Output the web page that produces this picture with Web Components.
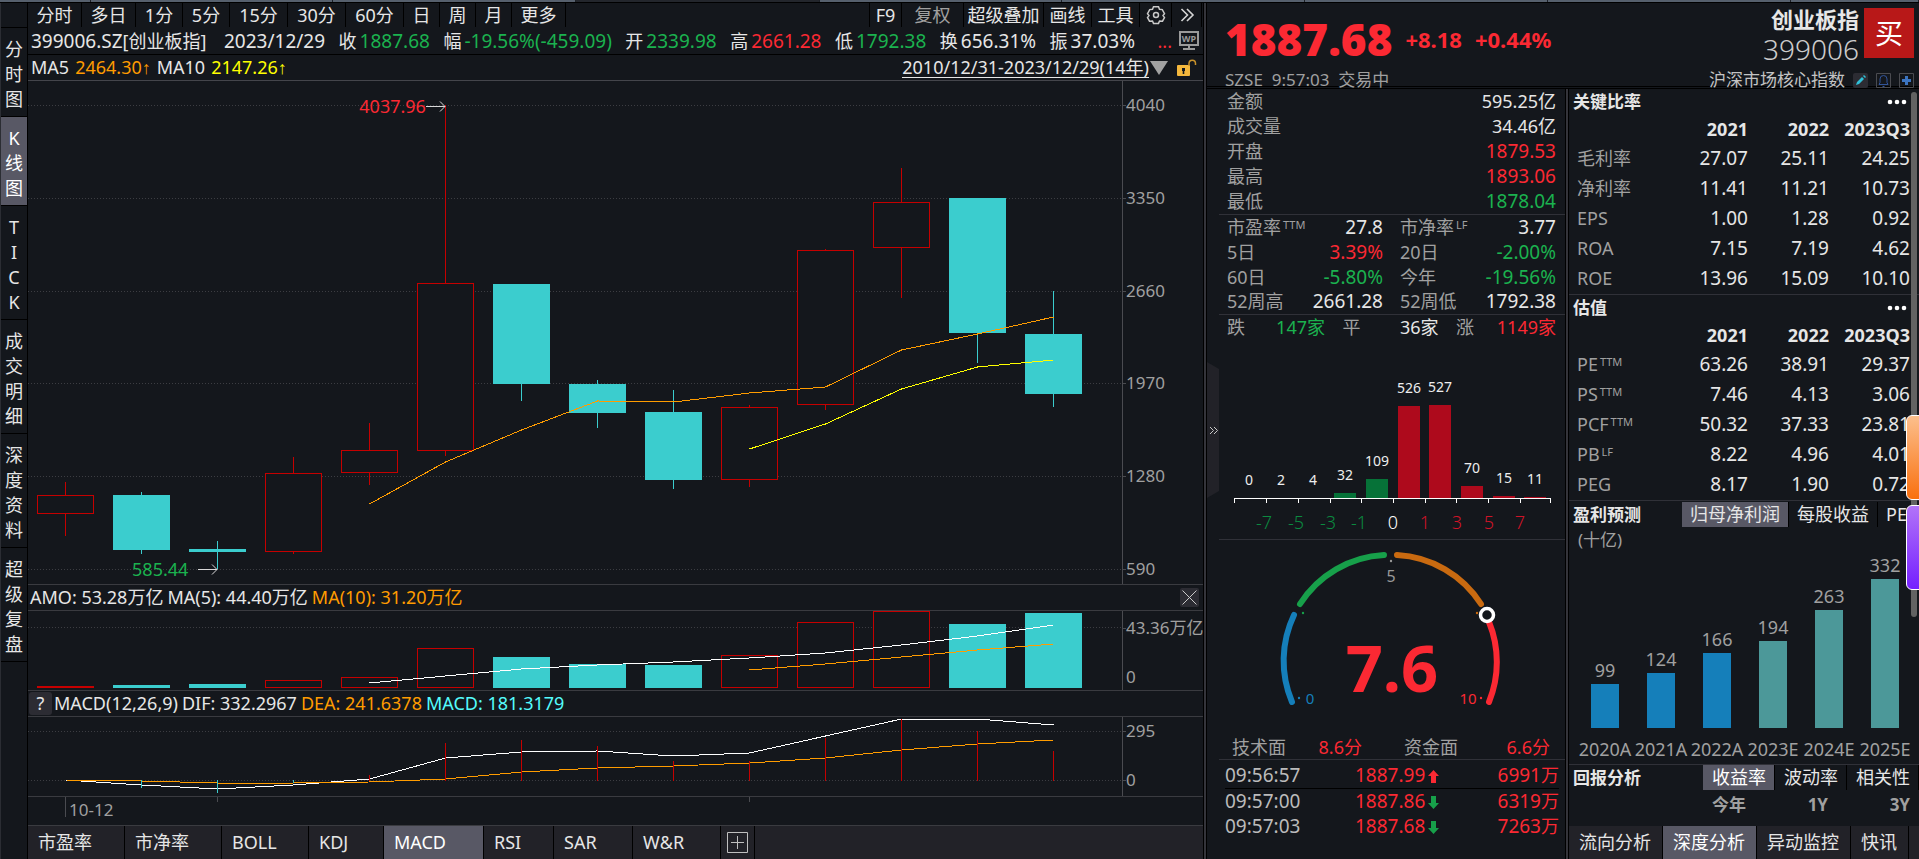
<!DOCTYPE html>
<html lang="zh-CN">
<head>
<meta charset="utf-8">
<title>创业板指 399006</title>
<style>
:root{--bg:#14171c;--line:#3a3b40;--txt:#e6e6e6;--dim:#a0a0a0;--red:#fb2933;--green:#1bb24f;--cyan:#3bcdce;--orange:#ff9c00;--panel:#222228;--active:#585865}
html,body{margin:0;height:100%;background:var(--bg)}
body{font:18px/25px "Noto Sans","Noto Sans CJK SC",sans-serif;color:var(--txt);overflow:hidden}
</style>
</head>
<body>
<stock-app></stock-app>
<script>
const RESET = `*{box-sizing:border-box}button{font:inherit;color:inherit;background:none;border:0;padding:0;margin:0;white-space:nowrap;cursor:pointer}
.r{color:var(--red)}.g{color:var(--green)}.o{color:var(--orange)}.y{color:#ff0}.c{color:#54fcfc}.d{color:var(--dim)}`;
function define(name, css, html){
  customElements.define(name, class extends HTMLElement{
    constructor(){
      super();
      const root = this.attachShadow({mode:'open'});
      root.innerHTML = `<style>${RESET}${css}</style>` + (typeof html === 'function' ? html(this) : html);
    }
  });
}
const X = i => 37.5 + 76 * i;      /* centre of the i-th yearly candle */
const path = (ys, from, color) => `<polyline fill="none" stroke="${color}" points="${ys.map((y,k)=>X(k+from)+','+y).join(' ')}"/>`;
const grid = ys => ys.map(y=>`<line x1="0" x2="1094" y1="${y}.5" y2="${y}.5" stroke="#3c3d42" stroke-dasharray="1 2"/>`).join('');
const bar = (i, top, bottom, up) => up
  ? `<rect x="${9.5+76*i}" y="${top+.5}" width="56" height="${Math.max(bottom-top-1,1)}" fill="#14171c" stroke="#c60000"/>`
  : `<rect x="${9+76*i}" y="${top}" width="57" height="${bottom-top}" fill="#3bcdce"/>`;
const CHART = `:host{display:grid;grid-template-columns:1fr 81px;position:relative;min-height:0}
svg{display:block;width:100%;height:100%;position:absolute;inset:0}
.plot{position:relative}
.axis{border-left:1px solid #4a4b50;display:flex;flex-direction:column;justify-content:space-between;color:var(--dim);font-size:17px;line-height:20px;white-space:nowrap}
.axis span{padding-left:3px;position:relative}
.axis .t::before{content:"";position:absolute;left:0;top:10px;width:3px;height:1px;background:#4a4b50}`;
const svg = (h, body) => `<svg viewBox="0 0 1094 ${h}" preserveAspectRatio="none" shape-rendering="crispEdges" aria-hidden="true">${body}</svg>`;

define('top-strip', `:host{display:flex;height:3px;border-bottom:1px solid #000}
i{background:#56606d;border-right:1px solid #1c2026}i.k{background:#23262c}`,
`<i style="flex:90"></i><i style="flex:243"></i><i style="flex:243"></i><i class="k" style="flex:244"></i><i style="flex:242"></i><i style="flex:243"></i><i style="flex:243"></i><i style="flex:243"></i><i style="flex:128"></i>`);

define('side-nav', `:host{display:block;width:28px;border-right:1px solid #000;border-left:1px solid #2b2d33;padding-top:24px;flex:none}
nav{border-top:1px solid #000}
button{display:block;width:26px;padding:9px 0 4px;border-bottom:1px solid #000;white-space:normal;text-align:center;line-height:25px}
button span{display:block}
.on{background:var(--active);color:#fff}`,
`<nav aria-label="视图">${['分时图','K线图','TICK','成交明细','深度资料','超级复盘'].map((t,i)=>`<button class="${i==1?'on':''}">${[...t].map(c=>`<span>${c}</span>`).join('')}</button>`).join('')}</nav>`);

define('period-bar', `:host{display:flex;height:24px;justify-content:space-between;padding-right:1px}
.l{display:grid;grid-template-columns:54px 54px 47px 47px 58px 58px 58px 36px 36px 36px 54px}
.p{display:grid;grid-template-columns:32px 62px 80px 48px 48px 32px 30px;border-left:1px solid #000}
button{border-right:1px solid #000;height:24px;line-height:24px;text-align:center}
svg{display:block;margin:auto}`,
`<div class="l">${['分时','多日','1分','5分','15分','30分','60分','日','周','月','更多'].map(t=>`<button>${t}</button>`).join('')}</div>
<div class="p"><button>F9</button><button class="d">复权</button><button>超级叠加</button><button>画线</button><button>工具</button>
<button aria-label="设置"><svg width="20" height="20" viewBox="0 0 20 20" fill="none" stroke="#c9c9c9" stroke-width="1.5"><path d="M7.5 1.8h5l1 2.5 2.8.3 2.2 4-1.5 2 1.5 2-2 3.6-3-.2-1 2.4h-5l-1-2.4-3 .2-2-3.6 1.5-2-1.5-2 2.2-4 2.8-.3z"/><circle cx="10" cy="10" r="2.5"/></svg></button>
<button aria-label="展开"><svg width="16" height="16" viewBox="0 0 16 16" fill="none" stroke="#d5d5d5" stroke-width="1.6"><path d="M2.500 2l6 6-6 6M8 2l6 6-6 6"/></svg></button></div>`);

define('quote-line', `:host{display:flex;height:28px;border-bottom:1px solid #000;align-items:center;padding:1px 4px 0 3px;line-height:26px;white-space:nowrap}
.f{display:flex;justify-content:space-between;width:1104px;font-size:19px}
.f>span:first-child{margin-right:4px}
b{font-weight:400;font-size:18px;margin-right:3px}
.s{font-size:18px}
.m{margin-left:auto;margin-right:7px}`,
`<div class="f"><span>399006.SZ<span class="s">[创业板指]</span></span><span>2023/12/29</span><span><b>收</b><span class="g">1887.68</span></span><span><b>幅</b><span class="g">-19.56%(-459.09)</span></span><span><b>开</b><span class="g">2339.98</span></span><span><b>高</b><span class="r">2661.28</span></span><span><b>低</b><span class="g">1792.38</span></span><span><b>换</b>656.31%</span><span><b>振</b>37.03%</span></div>
<span class="r m">...</span>
<svg width="20" height="20" viewBox="0 0 20 20" aria-hidden="true"><rect x="1" y="1" width="18" height="13" fill="none" stroke="#9a9a9a" stroke-width="2"/><path d="M9 15h2v2H9zM4 17h12v2H4z" fill="#9a9a9a"/><text x="10" y="11" text-anchor="middle" font-family="Noto Sans" font-weight="700" font-size="9" fill="#9a9a9a">WP</text></svg>`);

define('ma-line', `:host{display:flex;height:26px;border-bottom:1px solid #44454b;padding:0 6px 0 3px;align-items:center;justify-content:space-between;line-height:25px}
div{display:flex;align-items:center}
.a{gap:6px}
b{font-weight:400;font-family:"Liberation Sans",sans-serif}
.u{border-bottom:1px solid #e6e6e6;line-height:19px}
.k{margin-left:8px}`,
`<div class="a"><span>MA5</span><span class="o">2464.30<b>↑</b></span><span>MA10</span><span class="y">2147.26<b>↑</b></span></div>
<div><button class="u">2010/12/31-2023/12/29(14年)</button><svg width="20" height="14" viewBox="0 0 20 14" aria-hidden="true"><path d="M1 0h18l-9 14z" fill="#a2a2a2"/></svg>
<svg class="k" width="20" height="18" viewBox="0 0 20 18" aria-hidden="true"><rect x="0" y="6" width="13" height="11" rx="1" fill="#f5b83d"/><path d="M12 7V4.500a3.200 3.200 0 0 1 6.500 0V6" fill="none" stroke="#c9922b" stroke-width="1.500"/><path d="M5 9h3v3H7.300v3H5.700v-3H5z" fill="#14171c"/></svg></div>`);

const C = [[495,514,482,536,1],[495,550,492,554,0],[549,552,541,569,0],[473,552,457,554,1],[450,473,423,485,1],[283,451,105,456,1],[284,384,284,401,0],[384,413,380,428,0],[412,480,390,489,0],[407,480,405,487,1],[250,405,249,410,1],[202,248,168,298,1],[198,333,198,363,0],[334,394,291,407,0]];
define('kline-chart', CHART + `:host{flex:1;border-bottom:1px solid var(--line)}
.axis{padding:14px 0 5px}
.note{position:absolute;display:flex;align-items:center;line-height:20px;white-space:nowrap}
.note svg{position:static;width:20px;height:12px}
.hi{right:61.800%;top:3%}.lo{right:82.600%;bottom:1%;gap:10px}`,
`<div class="plot">${svg(503, grid([24,117,210,302,395,488]) + C.map(([t,b,h,l,up],i)=>{
  const w = `<rect x="${37+76*i}" y="${h-81}" width="1" height="${l-h}" fill="${up?'#c60000':'#3bcdce'}"/>`;
  return w + bar(i,t-81,b-81,up);}).join('')
  + path([423,381,349,320,321,312,306,269,253,236],4,'#ff9c00') + path([368,343,308,286,279],9,'#ff0'))}
<div class="note hi r">4037.96<svg viewBox="0 0 20 12" fill="none" stroke="#d8d8d8"><path d="M0 6.500h19M14 1.500l5 5-5 5"/></svg></div>
<div class="note lo g">585.44<svg viewBox="0 0 20 12" fill="none" stroke="#d8d8d8"><path d="M0 6.500h19M14 1.500l5 5-5 5"/></svg></div></div>
<div class="axis">${[4040,3350,2660,1970,1280,590].map(v=>`<span class="t">${v}</span>`).join('')}</div>`);

define('indicator-head', `:host{display:flex;height:26px;border-bottom:1px solid var(--line);padding:0 4px 0 2px;align-items:center;gap:4px;line-height:25px;white-space:nowrap;flex:none}
.x{margin-left:auto;width:19px;height:19px;background:#2c2c33;border-radius:2px}
.x svg{display:block}
.q{width:23px;height:23px;margin-left:-1px;margin-right:-2px;background:#2c2c33;border-radius:3px;line-height:23px}`,
el => el.getAttribute('kind') === 'amo'
 ? `<span>AMO: 53.28万亿</span><span>MA(5): 44.40万亿</span><span class="o">MA(10): 31.20万亿</span><button class="x" aria-label="关闭"><svg width="19" height="19" stroke="#c9c9c9" fill="none"><path d="M2.500 2.500l14 14M16.500 2.500l-14 14"/></svg></button>`
 : `<button class="q">?</button><span>MACD(12,26,9)</span><span>DIF: 332.2967</span><span class="o">DEA: 241.6378</span><span class="c">MACD: 181.3179</span>`);

const A = [[686,1],[685,0],[684,0],[680,1],[677,1],[648,1],[657,0],[664,0],[665,0],[655,1],[622,1],[611,1],[624,0],[613,0]];
define('amo-chart', CHART + `:host{height:80px;flex:none;border-bottom:1px solid var(--line)}.axis{padding:7px 0 3px}`,
`<div class="plot">${svg(79, grid([16]) + A.map(([t,up],i)=>bar(i,t-611,77,up)).join('')
 + path([72,65,58,54,51,47,42,34,25,14],4,'#fff') + path([59,53,46,39,33],9,'#ff9c00'))}</div><div class="axis"><span class="t">43.36万亿</span><span>0</span></div>`);

const M = [[1,780,788,0],[2,780,793,0],[3,780,783,0],[4,775,781,1],[5,743,781,1],[6,740,781,1],[7,746,781,1],[8,761,781,1],[9,761,781,1],[10,738,781,1],[11,719,781,1],[12,731,781,1],[13,751,781,1]];
define('macd-chart', CHART + `:host{height:80px;flex:none;border-bottom:1px solid var(--line)}.axis{padding:4px 0 6px}`,
`<div class="plot">${svg(79, grid([14,63])
 + path([63,68,72,68,62,41,35,34,39,36,19,2,2,8],0,'#fff') + path([63,64,66,66,65,62,55,51,49,46,41,33,27,23],0,'#ff9c00')
 + M.map(([i,t,b,up])=>`<rect x="${37+76*i}" y="${t-717}" width="1" height="${b-t}" fill="${up?'#c60000':'#3bcdce'}"/>`).join(''))}</div><div class="axis"><span class="t">295</span><span class="t">0</span></div>`);

define('time-axis', `:host{display:flex;height:29px;border-bottom:1px solid var(--line);flex:none;color:var(--dim);padding-left:37px}
span{border-left:1px solid #4a4b50;height:20px;padding-left:3px;font-size:17px;line-height:26px;width:152px;flex:none}
i{border-left:1px solid #4a4b50;height:5px;flex:none;width:532px}i:last-child{width:1px}`, `<span>10-12</span><i></i><i></i>`);

define('indicator-tabs', `:host{display:flex;background:var(--panel);height:33px;flex:none}
button{padding:0 10px;text-align:left;border-right:1px solid #000;line-height:33px;width:97px}
.w1{width:87px}.w2{width:75px}.w3{width:100px}.w4{width:70px}.w5{width:79px}.w6{width:88px}
.on{background:var(--active);color:#fff}.add{width:34px;padding:0 6px}svg{display:block}`,
`<button>市盈率</button><button>市净率</button><button class="w1">BOLL</button><button class="w2">KDJ</button><button class="w3 on">MACD</button><button class="w4">RSI</button><button class="w5">SAR</button><button class="w6">W&amp;R</button><button class="add" aria-label="添加"><svg width="21" height="21" fill="none" stroke="#c0c0c0"><path d="M.5.5h20v20H.5zM4 10.500h13M10.500 4v13"/></svg></button>`);

define('quote-head', `:host{display:flex;justify-content:space-between;height:86px;padding:0 5px 0 18px;border-bottom:3px double #000;white-space:nowrap;flex:none}
.p{display:flex;align-items:center;height:60px;padding-top:12px;font-weight:700;font-size:22px;gap:13px}
.p b{font-size:44px}
.s{font-size:17px;line-height:22px;margin-top:6px}
.n{display:grid;grid-template-columns:auto 50px;column-gap:5px;height:60px;padding-top:5px;text-align:right}
.n div{margin-top:-2px}
.n b{font-size:22px;line-height:26px;display:block}
.n span{font-size:28px;line-height:34px;display:block;color:#ccc;font-weight:300}
.n button{background:#b81818;color:#fff;font-size:28px;width:50px;height:50px;line-height:50px;text-align:center}
.t{display:flex;justify-content:flex-end;align-items:center;gap:8px;font-size:17px;line-height:22px;margin-top:6px;color:#c4c4c4}
svg{display:block}.t button{width:15px;height:15px}`,
`<div><div class="p r"><b>1887.68</b><span>+8.18</span><span>+0.44%</span></div><div class="s d">SZSE&nbsp; 9:57:03&nbsp; 交易中</div></div>
<div><div class="n"><div><b>创业板指</b><span>399006</span></div><button>买</button></div>
<div class="t"><span>沪深市场核心指数</span>
<button aria-label="编辑"><svg width="15" height="15"><rect width="15" height="15" rx="2" fill="#2c2c33"/><path d="M3 12l1-3 5-5 2 2-5 5zM10 3l1-1 2 2-1 1z" fill="#2fc0d8"/></svg></button>
<button aria-label="提醒"><svg width="15" height="15" fill="none" stroke="#4a4b50"><path d="M.5.500h14v14H.5z"/><path d="M3 11.500h9L11 9.500V6a3.500 3.500 0 0 0-7 0v3.500zM6.500 13.500h2" stroke="#31549a"/></svg></button>
<button aria-label="加自选"><svg width="15" height="15"><path d="M.5.500h14v14H.5z" fill="none" stroke="#4a4b50"/><path d="M6 3h3v3h3v3H9v3H6V9H3V6h3z" fill="#3c74c0"/></svg></button></div></div>`);

define('quote-stats', `:host{display:block}
section{border-bottom:1px solid #303138;padding:0 9px 0 8px}
.row{display:flex;justify-content:space-between;height:25px;line-height:25px;color:var(--dim)}
.row b,.two b,.three b{font-weight:400;font-size:19px;color:var(--txt)}
.row .u{font-size:18px}
.two{display:grid;grid-template-columns:156px 156px;justify-content:space-between;height:100px;grid-auto-rows:1fr;line-height:24px;color:var(--dim)}
.two span,.three span{display:flex;justify-content:space-between}
i{font-style:normal}
sup{font-size:11px;line-height:20px;vertical-align:top;margin-left:2px}
.three{display:grid;grid-template-columns:98px 96px 100px;justify-content:space-between;line-height:25px;border:0;color:var(--dim)}
.three b{font-size:18px}
b.r{color:var(--red)!important}b.g{color:var(--green)!important}`,
`<section><div class="row">金额<b class="u">595.25亿</b></div><div class="row">成交量<b class="u">34.46亿</b></div><div class="row">开盘<b class="r">1879.53</b></div><div class="row">最高<b class="r">1893.06</b></div><div class="row">最低<b class="g">1878.04</b></div></section>
<section class="two"><span><i>市盈率<sup>TTM</sup></i><b>27.8</b></span><span><i>市净率<sup>LF</sup></i><b>3.77</b></span><span>5日<b class="r">3.39%</b></span><span>20日<b class="g">-2.00%</b></span><span>60日<b class="g">-5.80%</b></span><span>今年<b class="g">-19.56%</b></span><span>52周高<b>2661.28</b></span><span>52周低<b>1792.38</b></span></section>
<section class="three"><span>跌<b class="g">147家</b></span><span>平<b>36家</b></span><span>涨<b class="r">1149家</b></span></section>`);

const H = [[0,498],[2,498],[4,498],[32,493],[109,479],[526,406],[527,405],[70,486],[15,496],[11,497]];
define('change-histogram', `:host{display:block;border-bottom:1px solid #303138;height:200px}svg{display:block;margin:auto}`,
`<svg width="346" height="199" viewBox="0 0 346 199" font-family="Noto Sans" text-anchor="middle">
${H.map(([v,y],i)=>{const x=[31,63,95,126,158,190,221,253,285,316][i];return `<rect x="${x-11}" y="${y-340}" width="22" height="${498-y}" fill="${i<5?'#067238':'#ae0a1c'}"/><text x="${x-(i<3?1:0)}" y="${y-340-13}" font-size="14" fill="#eee">${v}</text>`}).join('')}
<path fill="none" stroke="#fff" shape-rendering="crispEdges" d="M15.500 163v-4.500H331.500V163M47.500 158v5M79.500 158v5M111.500 158v5M142.500 158v5M174.500 158v5M206.500 158v5M237.500 158v5M269.500 158v5M301.500 158v5"/>
${[[-7,45],[-5,77],[-3,109],[-1,140],[0,174],[1,206],[3,238],[5,270],[7,301]].map(([v,x])=>`<text x="${x}" y="189" font-size="18" font-weight="300" fill="${v<0?'#0b8a40':v>0?'#d01428':'#fff'}">${v}</text>`).join('')}
</svg>`);

define('score-gauge', `:host{display:block;border-bottom:1px solid #303138;height:220px}
svg{display:block;margin:auto}
div{display:grid;grid-template-columns:130px 146px;justify-content:space-between;padding:0 15px 0 13px;line-height:24px;margin-top:-2px;color:var(--dim)}
span{display:flex;justify-content:space-between}b{font-weight:400}`,
`<svg width="346" height="197" viewBox="0 -1 346 197" font-family="Noto Sans" text-anchor="middle">
<g fill="none" stroke-width="6" stroke-linecap="round">
<path stroke="#157fba" d="M73 161a106 106 0 0 1 2-87"/><path stroke="#17a04a" d="M81 63a106 106 0 0 1 84-49"/><path stroke="#c96a10" d="M178 14a106 106 0 0 1 84 49"/><path stroke="#fb2933" d="M270 81a106 106 0 0 1 0 80"/></g>
<circle cx="268" cy="74" r="6.500" fill="#14171c" stroke="#fff" stroke-width="3.500"/>
<circle cx="80" cy="157" r="1.200" fill="#157fba"/><circle cx="84" cy="72" r="1.200" fill="#17a04a"/><circle cx="172" cy="20" r="1.200" fill="#999"/><circle cx="258" cy="72" r="1.200" fill="#c96a10"/><circle cx="262" cy="157" r="1.200" fill="#fb2933"/>
<text x="91" y="163" font-size="15" fill="#157fba">0</text><text x="172" y="41" font-size="16" fill="#999">5</text><text x="249" y="163" font-size="15" fill="#fb2933">10</text>
<text x="173" y="151" font-size="65" font-weight="700" fill="#fb2933">7.6</text></svg>
<div><span>技术面<b class="r">8.6分</b></span><span>资金面<b class="r">6.6分</b></span></div>`);

define('tick-list', `:host{display:block;padding:3px 6px 0 6px}
div{display:grid;grid-template-columns:120px 96px 1fr;line-height:25px;font-size:19px;color:#bbb}
div span{text-align:right}div :first-child{text-align:left}
.f{border-bottom:1px solid #000}
svg{vertical-align:-1px;margin-left:3px}i{font-style:normal;white-space:nowrap;padding-left:10px}b{font-weight:400;font-size:18px}`,
[['09:56:57','1887.99','6991',1],['09:57:00','1887.86','6319',0],['09:57:03','1887.68','7263',0]].map(([t,p,v,u],i)=>`<div class="${i?'':'f'}"><span>${t}</span><i class="r">${p}<svg width="11" height="13" viewBox="0 0 11 13"><path d="${u?'M5.500 0L11 6H8v7H3V6H0z':'M5.500 13L11 7H8V0H3v7H0z'}" fill="${u?'#fb2933':'#17a04a'}"/></svg></i><span class="r">${v}<b>万</b></span></div>`).join(''));

const T = {
 key:['关键比率',[['毛利率','','27.07','25.11','24.25'],['净利率','','11.41','11.21','10.73'],['EPS','','1.00','1.28','0.92'],['ROA','','7.15','7.19','4.62'],['ROE','','13.96','15.09','10.10']]],
 val:['估值',[['PE','TTM','63.26','38.91','29.37'],['PS','TTM','7.46','4.13','3.06'],['PCF','TTM','50.32','37.33','23.81'],['PB','LF','8.22','4.96','4.01'],['PEG','','8.17','1.90','0.72']]]};
define('ratio-table', `:host{display:block;border-bottom:1px solid #303138;padding:0 9px 1px 0}
.h{display:flex;justify-content:space-between;align-items:center;height:25px;padding:0 3px 0 4px;font-weight:700;font-size:17px}
svg{display:block}
table{border-collapse:collapse;table-layout:fixed;width:100%}
th,td{padding:0;text-align:right;height:30px;font-weight:400;line-height:24px;white-space:nowrap}
thead th{font-weight:700;height:29px;font-size:18px}td{font-size:19px}
tbody th{text-align:left;padding-left:8px;color:var(--dim)}
col.n{width:81px}sup{font-size:11px;line-height:20px;vertical-align:top;margin-left:2px}`,
el => {const [t,rows]=T[el.getAttribute('kind')];return `<div class="h">${t}<button aria-label="更多"><svg width="20" height="6" fill="#fff"><circle cx="3" cy="3" r="2.300"/><circle cx="10" cy="3" r="2.300"/><circle cx="17" cy="3" r="2.300"/></svg></button></div>
<table><colgroup><col><col class="n"><col class="n"><col class="n"></colgroup><thead><tr><th></th><th>2021</th><th>2022</th><th>2023Q3</th></tr></thead><tbody>${rows.map(r=>`<tr><th>${r[0]}${r[1]?`<sup>${r[1]}</sup>`:''}</th><td>${r[2]}</td><td>${r[3]}</td><td>${r[4]}</td></tr>`).join('')}</tbody></table>`});

const SEG = `.h{display:flex;height:25px;padding-left:4px;white-space:nowrap;overflow:hidden}
.h b{font-size:17px;margin-right:auto}
.h button{padding:0 8px;border-right:1px solid #000;flex:none}.on{background:var(--active);color:#fff}`;
define('profit-forecast', `:host{display:block;border-bottom:1px solid #303138;height:264px;padding-top:1px;color:var(--dim)}${SEG}
.h b,.h button{color:var(--txt)}.h b{width:109px;margin:0}
p{margin:0;padding-left:9px;font-size:17px;line-height:26px}
.bars{display:grid;grid-template-columns:repeat(6,56px);padding-left:8px;height:211px;margin-top:-2px}
.bars div{display:flex;flex-direction:column;justify-content:flex-end;align-items:center}
i{width:28px;background:#4c9899}i.a{background:#157fba}
small{font-size:18px;line-height:28px}em{font-style:normal;line-height:24px;padding:9px 0 2px}`,
`<div class="h"><b>盈利预测</b><button class="on">归母净利润</button><button>每股收益</button><button>PE</button></div><p>(十亿)</p><div class="bars">${[['2020A',99,44],['2021A',124,55],['2022A',166,75],['2023E',194,87],['2024E',263,118],['2025E',332,149]].map(([l,v,h],i)=>`<div><small>${v}</small><i class="${i<3?'a':''}" style="height:${h}px"></i><em>${l}</em></div>`).join('')}</div>`);

define('return-analysis', `:host{display:block}${SEG}
.h button{padding-left:9px}
.y{color:var(--dim);display:grid;grid-template-columns:177px 82px 82px;font-size:17px;font-weight:700;text-align:right;line-height:30px}`,
`<div class="h"><b>回报分析</b><button class="on">收益率</button><button>波动率</button><button>相关性</button></div><div class="y"><span>今年</span><span>1Y</span><span>3Y</span></div>`);

define('bottom-tabs', `:host{display:flex;margin-top:auto;height:33px;background:var(--panel);overflow:hidden;flex:none}
button{padding:0 11px 0 10px;border-right:1px solid #000;line-height:33px}.on{background:var(--active);color:#fff}`,
`<button>流向分析</button><button class="on">深度分析</button><button>异动监控</button><button>快讯</button>`);

define('quote-panel', `:host{display:flex;flex-direction:column;width:716px;flex:none;position:relative;border-left:1px solid #000;box-shadow:inset 2px 0 #34343a,inset 3px 0 #000;padding-left:3px}
.b{display:grid;grid-template-columns:12px 346px 4px 1fr;flex:1;min-height:0}
.b>div{display:flex;flex-direction:column;min-width:0}
.sp{background:#34343a;border:solid #000;border-width:0 1px}
.fold{align-self:start;margin-top:273px;width:12px;height:136px;background:var(--panel);clip-path:polygon(0 0,100% 7px,100% 129px,0 100%)}
.fold svg{display:block;margin:auto}
.sb{position:absolute;right:2px;top:89px;width:6px;height:525px;border-radius:3px;background:#626262}
.fl{position:absolute;right:-1px;width:14px;height:85px;border:1px solid #fff;border-radius:6px 0 0 6px}
.o1{top:412px;background:linear-gradient(#fcbf8c,#f9700f)}.o2{top:502px;background:linear-gradient(#b273f8,#7420ff)}`,
`<quote-head></quote-head><div class="b"><button class="fold" aria-label="收起"><svg width="9" height="9" fill="none" stroke="#c9c9c9"><path d="M1 1l3.500 3.500L1 8M5 1l3.500 3.500L5 8"/></svg></button>
<div><quote-stats></quote-stats><change-histogram></change-histogram><score-gauge></score-gauge><tick-list></tick-list></div><span class="sp"></span>
<div><ratio-table kind="key"></ratio-table><ratio-table kind="val"></ratio-table><profit-forecast></profit-forecast><return-analysis></return-analysis><bottom-tabs></bottom-tabs></div></div>
<span class="sb"></span><span class="fl o1"></span><span class="fl o2"></span>`);

define('chart-panel', `:host{display:flex;flex-direction:column;flex:1;min-width:0}`,
`<period-bar></period-bar><quote-line></quote-line><ma-line></ma-line><kline-chart></kline-chart><indicator-head kind="amo"></indicator-head><amo-chart></amo-chart><indicator-head kind="macd"></indicator-head><macd-chart></macd-chart><time-axis></time-axis><indicator-tabs></indicator-tabs>`);

define('stock-app', `:host{display:flex;flex-direction:column;height:100vh;overflow:hidden}main{display:flex;flex:1;min-height:0}`,
`<top-strip></top-strip><main><side-nav></side-nav><chart-panel></chart-panel><quote-panel></quote-panel></main>`);
</script>
</body>
</html>
